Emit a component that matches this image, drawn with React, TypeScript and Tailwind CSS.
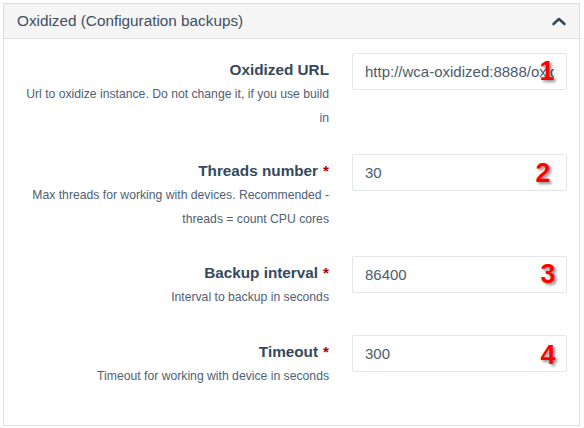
import React from 'react';

type Field = {
  label: string;
  required: boolean;
  help: string[];
  value: string;
  mark: string;
  markClass: string;
  rowClass: string;
};

const fields: Field[] = [
  {
    label: 'Oxidized URL',
    required: false,
    help: ['Url to oxidize instance. Do not change it, if you use build', 'in'],
    value: 'http://wca-oxidized:8888/oxidized',
    mark: '1',
    markClass: 'left-[185px] top-[5px]',
    rowClass: 'mt-0',
  },
  {
    label: 'Threads number',
    required: true,
    help: ['Max threads for working with devices. Recommended -', 'threads = count CPU cores'],
    value: '30',
    mark: '2',
    markClass: 'left-[181px] top-[6px]',
    rowClass: 'mt-[24px]',
  },
  {
    label: 'Backup interval',
    required: true,
    help: ['Interval to backup in seconds'],
    value: '86400',
    mark: '3',
    markClass: 'left-[186px] top-[5px]',
    rowClass: 'mt-[25px]',
  },
  {
    label: 'Timeout',
    required: true,
    help: ['Timeout for working with device in seconds'],
    value: '300',
    mark: '4',
    markClass: 'left-[186px] top-[7px]',
    rowClass: 'mt-[26px]',
  },
];

function ChevronUp() {
  return (
    <svg width="16" height="10" viewBox="0 0 16 10" fill="none">
      <polyline
        points="2.5,8 8,3 13.5,8"
        stroke="#34495e"
        strokeWidth="2.6"
        strokeLinecap="round"
        strokeLinejoin="round"
      />
    </svg>
  );
}

function FieldRow({ field }: { field: Field }) {
  return (
    <div className={`flex items-start ${field.rowClass}`}>
      <div className="w-[325px] shrink-0 text-right pt-[7px]">
        <div className="text-[15.3px] leading-[20px] font-bold text-[#34495e]">
          {field.label}
          {field.required && <span className="text-[#a00] ml-[5px]">*</span>}
        </div>
        <div className="mt-[2px] text-[12.2px] leading-[24px] text-[#4f6073]">
          {field.help.map((line) => (
            <div key={line}>{line}</div>
          ))}
        </div>
      </div>
      <div className="relative ml-[23px] w-[215px] shrink-0">
        <input
          readOnly
          value={field.value}
          className="w-full h-[37px] border border-[#e3e6ea] rounded-[2px] bg-white px-[12px] text-[15px] text-[#4d5b6b] outline-none"
          style={{ fontFamily: '"Liberation Sans", Arial, sans-serif' }}
        />
        <span
          className={`absolute ${field.markClass} w-[20px] text-center text-[27px] leading-[27px] font-bold text-[#ff0000] [text-shadow:2px_2px_3px_rgba(0,0,0,0.45)]`}
        >
          {field.mark}
        </span>
      </div>
    </div>
  );
}

export default function App() {
  return (
    <div
      className="w-[584px] h-[428px] bg-white pt-[3px] pl-[3px]"
      style={{ fontFamily: '"Liberation Sans", Arial, sans-serif' }}
    >
      <div className="w-[577px] h-[423px] border border-[#dddddd] bg-white">
        <div className="h-[35px] bg-[#f5f5f5] border-b border-[#e3e3e3] flex items-center justify-between pl-[13px] pr-[12px]">
          <span className="text-[15.3px] text-[#3d4f63]">Oxidized (Configuration backups)</span>
          <ChevronUp />
        </div>
        <div className="pt-[14px] pr-[12px]">
          {fields.map((f) => (
            <FieldRow key={f.label} field={f} />
          ))}
        </div>
      </div>
    </div>
  );
}
